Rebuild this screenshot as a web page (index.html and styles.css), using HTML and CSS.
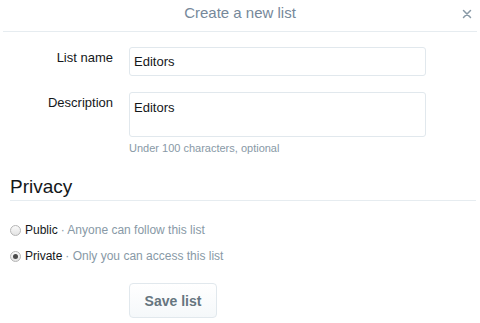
FILE: index.html
```html
<!DOCTYPE html>
<html lang="en">
<head>
  <meta charset="UTF-8" />
  <title>Create a new list</title>
  <link rel="stylesheet" href="styles.css">
</head>
<body>
  <div class="modal">
    <div class="modal-header">
      <h3 class="modal-title">Create a new list</h3>
      <button class="close-btn" type="button" aria-label="Close">
        <svg width="10" height="10" viewBox="0 0 10 10">
          <path d="M1.5 1.5 L8.5 8.5 M8.5 1.5 L1.5 8.5" stroke="#8899a6" stroke-width="1.5" stroke-linecap="round" fill="none"/>
        </svg>
      </button>
    </div>

    <form class="list-form">
      <div class="field">
        <label class="field-label" for="listName">List name</label>
        <div class="field-control">
          <input type="text" id="listName" class="text-input" value="Editors" />
        </div>
      </div>

      <div class="field">
        <label class="field-label" for="listDesc">Description</label>
        <div class="field-control">
          <textarea id="listDesc" class="text-area">Editors</textarea>
          <p class="hint">Under 100 characters, optional</p>
        </div>
      </div>

      <h2 class="section-title">Privacy</h2>

      <div class="radio-row">
        <span class="radio"></span>
        <span class="radio-label">Public</span>
        <span class="radio-desc">&middot; Anyone can follow this list</span>
      </div>
      <div class="radio-row">
        <span class="radio checked"></span>
        <span class="radio-label">Private</span>
        <span class="radio-desc">&middot; Only you can access this list</span>
      </div>

      <div class="actions">
        <button type="button" class="save-btn">Save list</button>
      </div>
    </form>
  </div>
</body>
</html>
```

FILE: styles.css
```css
* {
  margin: 0;
  padding: 0;
  box-sizing: border-box;
}
body {
  font-family: 'Liberation Sans', Arial, sans-serif;
  background: #fff;
  color: #14171a;
  width: 480px;
  height: 323px;
  overflow: hidden;
}
.modal-header {
  height: 32px;
  border-bottom: 1px solid #e6ecf0;
  margin: 0 3px;
  display: flex;
  align-items: center;
  justify-content: center;
  position: relative;
}
.modal-title {
  font-size: 15px;
  font-weight: normal;
  color: #76889a;
  line-height: 26px;
  margin-top: -5px;
}
.close-btn {
  position: absolute;
  right: 4px;
  top: 8px;
  width: 12px;
  height: 12px;
  border: none;
  background: none;
  display: flex;
  align-items: center;
  justify-content: center;
  cursor: pointer;
}
.list-form {
  padding-top: 15px;
}
.field {
  display: flex;
  align-items: flex-start;
  margin-bottom: 16px;
}
.field-label {
  width: 113px;
  text-align: right;
  font-size: 13px;
  line-height: 18px;
  padding-top: 2px;
  margin-right: 16px;
  color: #14171a;
}
.field-control {
  width: 297px;
}
.text-input,
.text-area {
  width: 297px;
  border: 1px solid #e1e8ed;
  border-radius: 3px;
  font-family: 'Liberation Sans', Arial, sans-serif;
  font-size: 13px;
  color: #14171a;
  padding: 0 4px;
  background: #fff;
  outline: none;
}
.text-input {
  height: 29px;
  line-height: 27px;
}
.text-area {
  display: block;
  height: 45px;
  padding-top: 6px;
  line-height: 18px;
  resize: none;
}
.hint {
  font-size: 11px;
  line-height: 14px;
  margin-top: 4px;
  color: #8899a6;
}
.field:nth-child(2) {
  margin-bottom: 20px;
}
.section-title {
  font-size: 19px;
  font-weight: normal;
  line-height: 24px;
  color: #14171a;
  margin: 0 4px 20px 10px;
  padding-bottom: 1px;
  border-bottom: 1px solid #e6ecf0;
}
.radio-row {
  display: flex;
  align-items: center;
  height: 18px;
  padding-left: 10px;
  font-size: 12px;
  margin-bottom: 8px;
}
.radio-row + .radio-row {
  margin-top: 1px;
}
.radio {
  width: 11px;
  height: 11px;
  border-radius: 50%;
  border: 1px solid #b5b5b5;
  background: linear-gradient(#fafafa, #e3e3e3);
  margin-right: 4px;
  display: flex;
  align-items: center;
  justify-content: center;
}
.radio.checked::after {
  content: "";
  width: 5px;
  height: 5px;
  border-radius: 50%;
  background: #4a4a4a;
}
.radio-label {
  color: #14171a;
  margin-right: 3px;
}
.radio-desc {
  color: #8899a6;
}
.actions {
  padding-left: 129px;
  margin-top: 18px;
}
.save-btn {
  width: 88px;
  height: 35px;
  border: 1px solid #e1e8ed;
  border-radius: 4px;
  background: linear-gradient(#fff, #f5f8fa);
  font-family: 'Liberation Sans', Arial, sans-serif;
  font-size: 14px;
  font-weight: bold;
  color: #66757f;
  cursor: pointer;
}
```
